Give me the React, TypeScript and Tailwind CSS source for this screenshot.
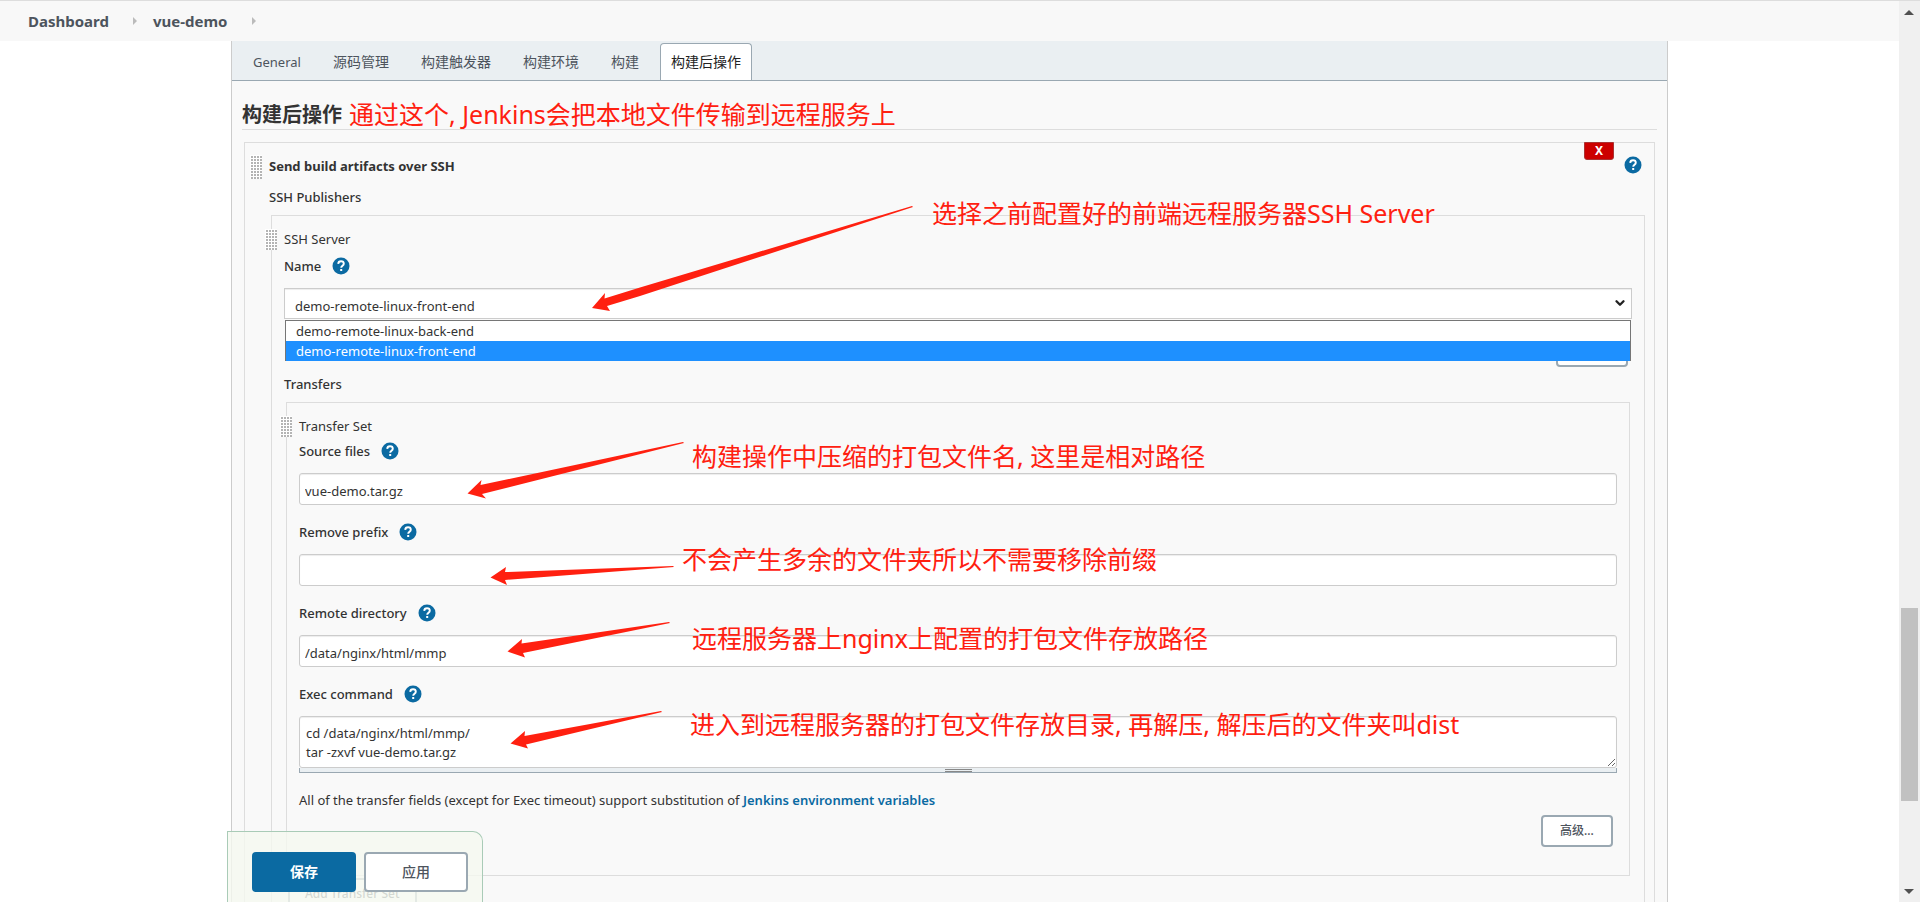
import React, { useState } from "react";
import { ChevronDown } from "lucide-react";

const tabs = ["General", "源码管理", "构建触发器", "构建环境", "构建", "构建后操作"];

const servers = ["demo-remote-linux-back-end", "demo-remote-linux-front-end"];

const notes = [
  { text: "通过这个, Jenkins会把本地文件传输到远程服务上", place: "left-[349px] top-[96px]" },
  { text: "选择之前配置好的前端远程服务器SSH Server", place: "left-[932px] top-[195px]" },
  { text: "构建操作中压缩的打包文件名, 这里是相对路径", place: "left-[692px] top-[438px]" },
  { text: "不会产生多余的文件夹所以不需要移除前缀", place: "left-[682px] top-[541px]" },
  { text: "远程服务器上nginx上配置的打包文件存放路径", place: "left-[692px] top-[620px]" },
  { text: "进入到远程服务器的打包文件存放目录, 再解压, 解压后的文件夹叫dist", place: "left-[690px] top-[706px]" },
];

const arrows = [
  "592,308 605,293 604.5,298.5 640,287.5 912,206 913,207 640,296 607,306 610,311",
  "467.5,493.5 481.5,480 480.5,485 683,442 684,443 482,494 486,498.5",
  "490.5,577.5 506,567 505,572 673,566 674,567 505,580 507,585",
  "507.5,651.5 522,639 521.5,643.5 669,622 670,623 523,653 525,657.5",
  "510.5,743.5 525,731 524.5,736 661,711 662,712 526,744.5 528,748.5",
];

function HelpIcon() {
  return (
    <button type="button" aria-label="Help" className="block">
      <svg width="18" height="18" viewBox="0 0 18 18">
        <circle cx="9" cy="9" r="8.5" fill="#0b6aa2" />
        <path
          d="M6.2 6.9C6.3 5.2 7.4 4.3 9 4.3s2.8 1 2.8 2.4c0 1.900-2.600 2.100-2.600 4"
          fill="none"
          stroke="#fff"
          strokeWidth="1.900"
        />
        <rect x="8.200" y="12" width="2" height="2" fill="#fff" />
      </svg>
    </button>
  );
}

function DragHandle({ tall }: { tall?: boolean }) {
  return (
    <div
      className={`absolute w-3 bg-white bg-[linear-gradient(#fff_1px,transparent_1px),linear-gradient(90deg,#fff_1px,#b4b4b4_1px)] bg-[length:3px_3px] ${
        tall ? "left-[5px] top-3 h-6" : "-left-[7px] top-[13px] h-[21px]"
      }`}
    ></div>
  );
}

function FieldLabel({ id, text }: { id: string; text: string }) {
  return (
    <div className="flex items-center gap-[11px] h-5 mb-3">
      <label htmlFor={id} className="font-medium">
        {text}
      </label>
      <HelpIcon />
    </div>
  );
}

function TextField({ id, label, value }: { id: string; label: string; value: string }) {
  return (
    <div className="mb-[17px]">
      <FieldLabel id={id} text={label} />
      <input
        id={id}
        type="text"
        defaultValue={value}
        className="block w-full h-8 px-[5px] pt-[3px] bg-white border border-[#ccc] rounded-[3px] shadow-[inset_0_1px_1px_rgba(0,0,0,0.075)]"
      />
    </div>
  );
}

function SmallButton({ text }: { text: string }) {
  return (
    <button
      type="button"
      className="block h-8 min-w-[72px] px-[15px] bg-white border-2 border-[#9aa8b2] rounded-[4px] text-xs font-medium text-[#4d545d]"
    >
      {text}
    </button>
  );
}

function ServerSelect() {
  const [server, setServer] = useState(servers[1]);

  return (
    <div className="relative">
      <select
        id="server"
        value={server}
        onChange={(e) => setServer(e.target.value)}
        className="block w-full h-[31px] pl-[10px] pt-1 appearance-none bg-white border border-[#ccc] shadow-[inset_0_1px_1px_rgba(0,0,0,0.075)]"
      >
        {servers.map((name) => (
          <option key={name}>{name}</option>
        ))}
      </select>
      <ChevronDown
        size={14}
        strokeWidth={4}
        className="absolute right-[5px] top-2 text-[#222] pointer-events-none"
      />
      <ul className="absolute z-10 left-px right-px top-8 bg-white border border-b-0 border-[#767676]">
        {servers.map((name) => (
          <li
            key={name}
            className={`h-5 pl-[10px] leading-5 ${
              name === server ? "bg-[#1e90ff] text-white" : ""
            }`}
          >
            {name}
          </li>
        ))}
      </ul>
    </div>
  );
}

function TransferSet() {
  return (
    <div className="relative mx-[2px] mt-2 px-3 pt-[13px] pb-7 border border-[#ddd]">
      <DragHandle />
      <div>Transfer Set</div>
      <div className="mt-[5px]">
        <TextField id="source" label="Source files" value="vue-demo.tar.gz" />
        <TextField id="prefix" label="Remove prefix" value="" />
        <TextField id="directory" label="Remote directory" value="/data/nginx/html/mmp" />
        <FieldLabel id="command" text="Exec command" />
        <textarea
          id="command"
          defaultValue={"cd /data/nginx/html/mmp/\ntar -zxvf vue-demo.tar.gz"}
          className="block w-full h-[52px] px-1.5 pt-[7px] leading-[19px] overflow-hidden resize-y bg-white border border-[#ccc] rounded-[3px] shadow-[inset_0_1px_1px_rgba(0,0,0,0.075)]"
        />
        <div className="flex justify-center items-center h-[5px] bg-[#eaeff2] border border-t-0 border-[#9aa8b2]">
          <div className="w-[27px] h-[3px] border-y border-[#888]"></div>
        </div>
      </div>
      <p className="mt-[17px]">
        All of the transfer fields (except for Exec timeout) support substitution of{" "}
        <a href="#env" className="font-semibold text-[#0b6aa2]">
          Jenkins environment variables
        </a>
      </p>
      <div className="flex justify-end mt-[5px] mr-1">
        <SmallButton text="高级..." />
      </div>
    </div>
  );
}

function SshServer() {
  return (
    <div className="relative ml-[2px] mt-2 px-3 pt-[13px] pb-7 border border-[#ddd]">
      <DragHandle />
      <div>SSH Server</div>
      <div className="mt-[7px]">
        <FieldLabel id="server" text="Name" />
        <ServerSelect />
      </div>
      <div className="flex justify-end mt-4 mr-1">
        <SmallButton text="高级..." />
      </div>
      <div className="mt-[7px] font-medium">Transfers</div>
      <TransferSet />
      <div className="flex mt-0.5 ml-1">
        <SmallButton text="Add Transfer Set" />
      </div>
    </div>
  );
}

function Scrollbar() {
  return (
    <div className="relative w-[21px] shrink-0 bg-[#f0f0f0] border-t border-[#ddd]">
      <svg className="absolute left-[5px] top-[9px]" width="10" height="5">
        <path d="M0 5 5 0l5 5z" fill="#505050" />
      </svg>
      <div className="absolute left-[2px] right-[2px] top-[67.4%] h-[193px] bg-[#c1c1c1]"></div>
      <svg className="absolute left-[5px] bottom-2" width="10" height="5">
        <path d="M0 0 5 5l5-5z" fill="#505050" />
      </svg>
    </div>
  );
}

export default function App() {
  return (
    <div className="relative flex h-screen overflow-hidden bg-white text-[13px] leading-5 text-[#333] font-['Noto_Sans','Noto_Sans_CJK_SC',sans-serif]">
      <div className="flex-1 min-w-0">
        <nav className="flex items-center h-[41px] pl-7 bg-[#f8f8f8] border-t border-[#ddd] text-[15px] font-bold text-[#4d545d]">
          <a href="#dashboard">Dashboard</a>
          <svg width="4" height="8" className="ml-6 mr-4">
            <path d="M0 0l4 4-4 4z" fill="#bbb" />
          </svg>
          <a href="#vue-demo">vue-demo</a>
          <svg width="4" height="8" className="ml-6">
            <path d="M0 0l4 4-4 4z" fill="#bbb" />
          </svg>
        </nav>

        <main className="mx-[231px] bg-[#f9f9f9] border-x border-[#ccc]">
          <div className="flex gap-[10px] h-10 pl-[10px] pt-[2px] bg-[#eaeff2] border-b border-[#9aa8b2]">
            {tabs.map((tab, index) => (
              <button
                key={tab}
                type="button"
                className={`px-[10px] border border-b-0 rounded-t-[4px] ${
                  index === 5
                    ? "bg-white border-[#9aa8b2] text-[#222]"
                    : "border-transparent text-[#4d545d]"
                } ${index === 0 ? "text-[13px]" : "text-sm"}`}
              >
                {tab}
              </button>
            ))}
          </div>

          <div className="px-[10px] pt-5">
            <h2 className="h-[29px] leading-7 border-b border-[#ddd] text-xl font-bold">
              构建后操作
            </h2>
            <div className="relative mx-[2px] mt-3 pl-6 pr-[9px] pt-[13px] border border-[#ddd]">
              <DragHandle tall />
              <button
                type="button"
                className="absolute right-10 -top-px w-[30px] h-[18px] bg-[#c00] border border-[#a33] rounded-b-[3px] text-xs leading-4 font-bold text-white"
              >
                X
              </button>
              <div className="absolute right-3 top-[13px]">
                <HelpIcon />
              </div>
              <div className="font-bold">Send build artifacts over SSH</div>
              <div className="mt-[11px] font-medium">SSH Publishers</div>
              <SshServer />
            </div>
          </div>
        </main>
      </div>

      <Scrollbar />

      <div className="absolute z-20 left-[227px] bottom-0 flex gap-2 pl-6 pr-[14px] pt-5 pb-[10px] bg-[#f5f9f0]/80 border border-b-0 border-[#a9cbb7] rounded-tr-[10px]">
        <button
          type="button"
          className="w-[104px] h-10 bg-[#0b6aa2] rounded-[4px] text-sm font-bold text-white"
        >
          保存
        </button>
        <button
          type="button"
          className="w-[104px] h-10 bg-white border-2 border-[#9aa8b2] rounded-[4px] text-sm font-medium text-[#4d545d]"
        >
          应用
        </button>
      </div>

      {/* red notes drawn over the form */}
      <svg className="absolute z-30 inset-0 w-full h-full pointer-events-none">
        {arrows.map((points) => (
          <polygon key={points} points={points} fill="#ff2010" />
        ))}
      </svg>
      {notes.map((note) => (
        <p
          key={note.text}
          className={`absolute z-30 whitespace-nowrap text-[25px] leading-9 text-[#ff2010] pointer-events-none ${note.place}`}
        >
          {note.text}
        </p>
      ))}
    </div>
  );
}
